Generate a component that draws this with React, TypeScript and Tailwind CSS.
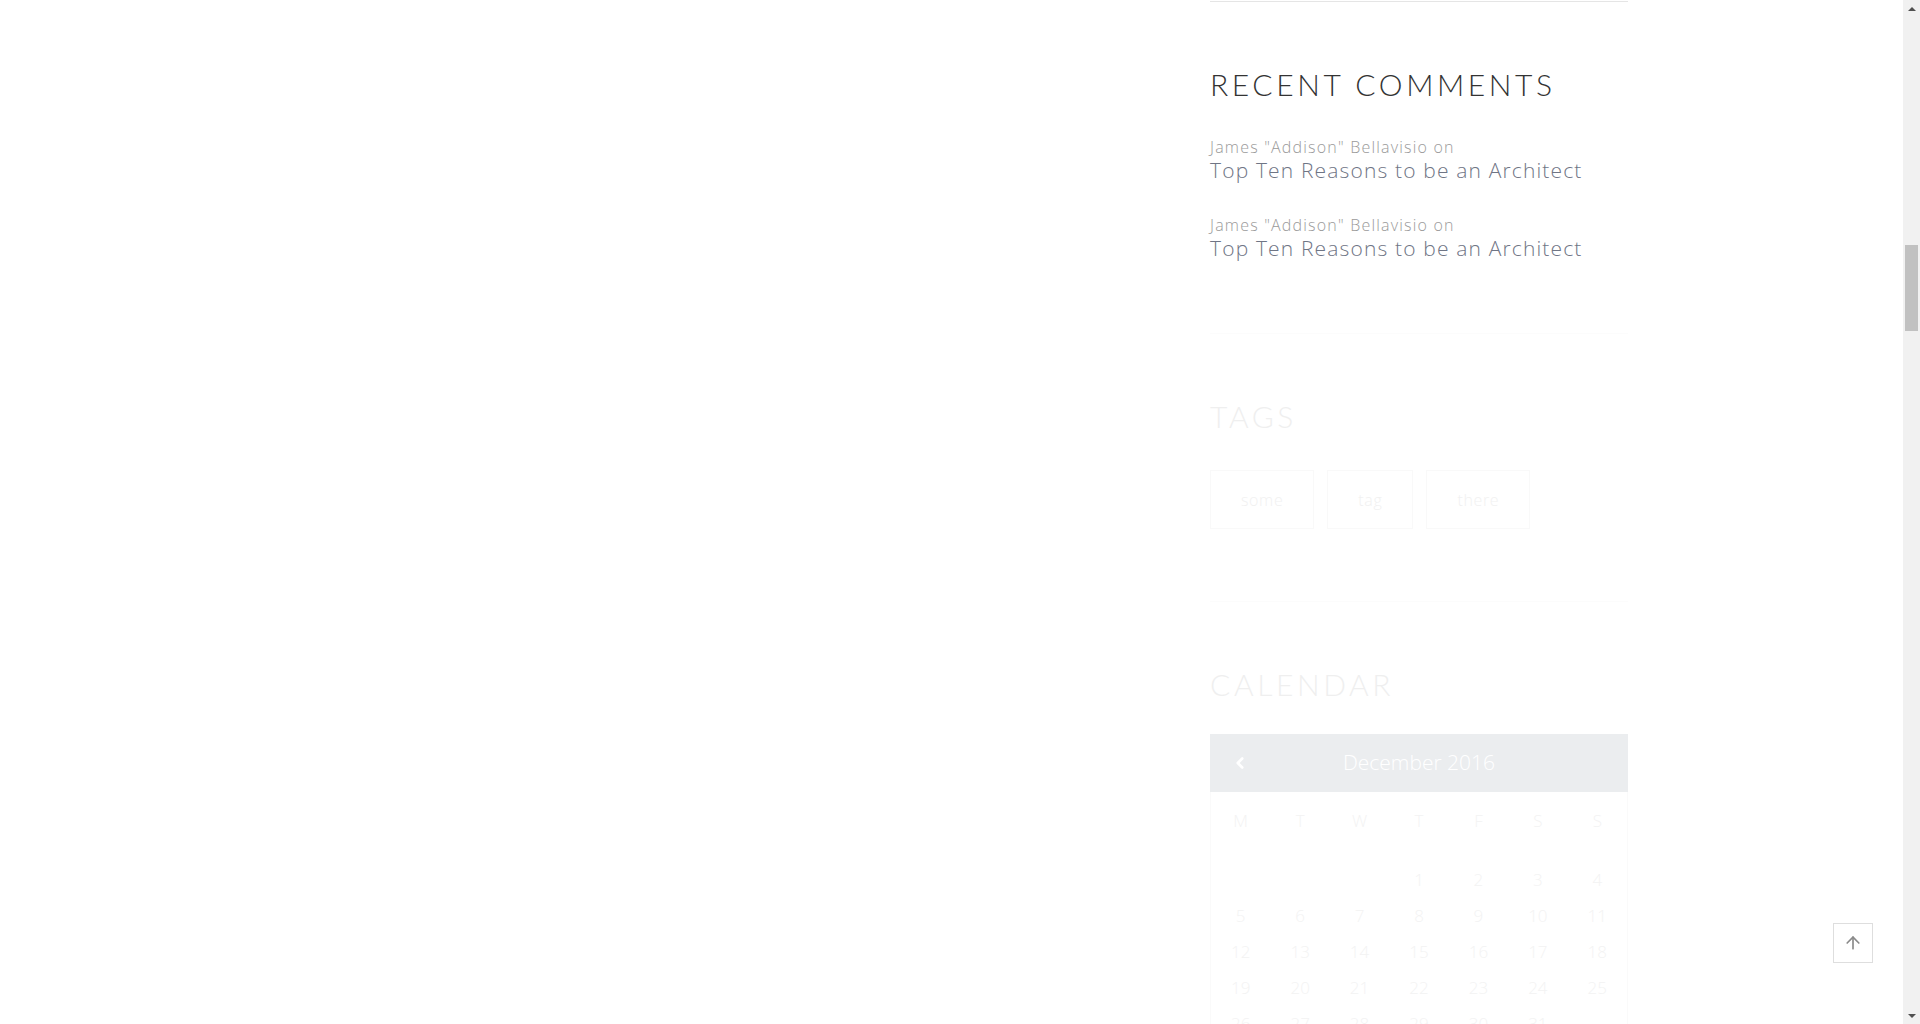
import React from 'react';
import { ArrowUp, ChevronLeft } from 'lucide-react';

const comments = [
  { author: 'James "Addison" Bellavisio', post: 'Top Ten Reasons to be an Architect' },
  { author: 'James "Addison" Bellavisio', post: 'Top Ten Reasons to be an Architect' },
];

const tags = ['some', 'tag', 'there'];

const dayNames = ['M', 'T', 'W', 'T', 'F', 'S', 'S'];

// December 2016 starts on a Thursday
const weeks: (number | null)[][] = [
  [null, null, null, 1, 2, 3, 4],
  [5, 6, 7, 8, 9, 10, 11],
  [12, 13, 14, 15, 16, 17, 18],
  [19, 20, 21, 22, 23, 24, 25],
  [26, 27, 28, 29, 30, 31, null],
];

const headingFont = { fontFamily: 'Lato, "Open Sans", sans-serif' };
const bodyFont = { fontFamily: '"Open Sans", Lato, sans-serif' };

const WidgetTitle: React.FC<{ children: React.ReactNode; faded?: boolean }> = ({ children, faded }) => (
  <h3
    style={headingFont}
    className={`text-[30px] leading-[36px] font-light tracking-[0.12em] uppercase ${
      faded ? 'text-[#efefef]' : 'text-[#333333]'
    }`}
  >
    {children}
  </h3>
);

export default function App() {
  return (
    <div className="relative flex h-[1024px] w-full overflow-hidden bg-white" style={bodyFont}>
      {/* Page */}
      <div className="flex-1">
        <aside className="ml-[1210px] w-[418px]">
          <div className="h-[2px] border-b border-[#e5e5e5]" />

          {/* Recent comments */}
          <section className="pt-[64px] pb-[72px] border-b border-[#fcfcfc]">
            <WidgetTitle>Recent Comments</WidgetTitle>
            <ul className="mt-[35px] flex flex-col gap-[32px]">
              {comments.map((c, i) => (
                <li key={i}>
                  <div className="text-[16px] leading-[20px] text-[#9a9a9a] font-light tracking-[0.075em]">
                    {c.author} on
                  </div>
                  <a className="block text-[21px] leading-[26px] text-[#6f7585] font-light tracking-[0.055em]">
                    {c.post}
                  </a>
                </li>
              ))}
            </ul>
          </section>

          {/* Tags */}
          <section className="pt-[64px] pb-[72px] border-b border-[#fcfcfc]">
            <WidgetTitle faded>Tags</WidgetTitle>
            <div className="mt-[36px] flex gap-[13px]">
              {tags.map((t) => (
                <span
                  key={t}
                  className="h-[59px] px-[30px] flex items-center border border-[#f9f9f9] text-[16px] font-light tracking-[0.04em] text-[#f1f1f1]"
                >
                  {t}
                </span>
              ))}
            </div>
          </section>

          {/* Calendar */}
          <section className="pt-[64px]">
            <WidgetTitle faded>Calendar</WidgetTitle>
            <div className="mt-[32px]">
              <div className="h-[58px] bg-[#ebedef] flex items-center relative">
                <ChevronLeft className="absolute left-[21px] w-[18px] h-[18px] text-white" strokeWidth={3.5} />
                <div className="flex-1 text-center text-white text-[21px] font-light">December 2016</div>
              </div>
              <div className="border-x border-[#fafafa] pb-4">
                <div className="grid grid-cols-7 h-[58px] items-center">
                  {dayNames.map((d, i) => (
                    <div key={i} className="text-center text-[17px] font-light text-[#f3f3f3]">
                      {d}
                    </div>
                  ))}
                </div>
                <div className="pt-[12px]">
                  {weeks.map((w, wi) => (
                    <div key={wi} className="grid grid-cols-7 h-[36px] items-center">
                      {w.map((d, di) => (
                        <div key={di} className="text-center text-[17px] font-light text-[#f3f3f3]">
                          {d ?? ''}
                        </div>
                      ))}
                    </div>
                  ))}
                </div>
              </div>
            </div>
          </section>
        </aside>
      </div>

      {/* Scrollbar */}
      <div className="w-[17px] bg-[#f1f1f1] flex flex-col items-center">
        <div className="h-[17px] flex items-center justify-center">
          <div className="w-0 h-0 border-x-[4px] border-x-transparent border-b-[4px] border-b-[#505050]" />
        </div>
        <div className="flex-1 w-full px-[2px] pt-[228px]">
          <div className="h-[86px] bg-[#c1c1c1]" />
        </div>
        <div className="h-[17px] flex items-center justify-center">
          <div className="w-0 h-0 border-x-[4px] border-x-transparent border-t-[4px] border-t-[#505050]" />
        </div>
      </div>

      {/* Back to top */}
      <button className="absolute right-[47px] bottom-[61px] w-[40px] h-[40px] border border-[#dedede] bg-white flex items-center justify-center">
        <ArrowUp className="w-[20px] h-[20px] text-[#8a8a8a]" strokeWidth={2} />
      </button>
    </div>
  );
}
